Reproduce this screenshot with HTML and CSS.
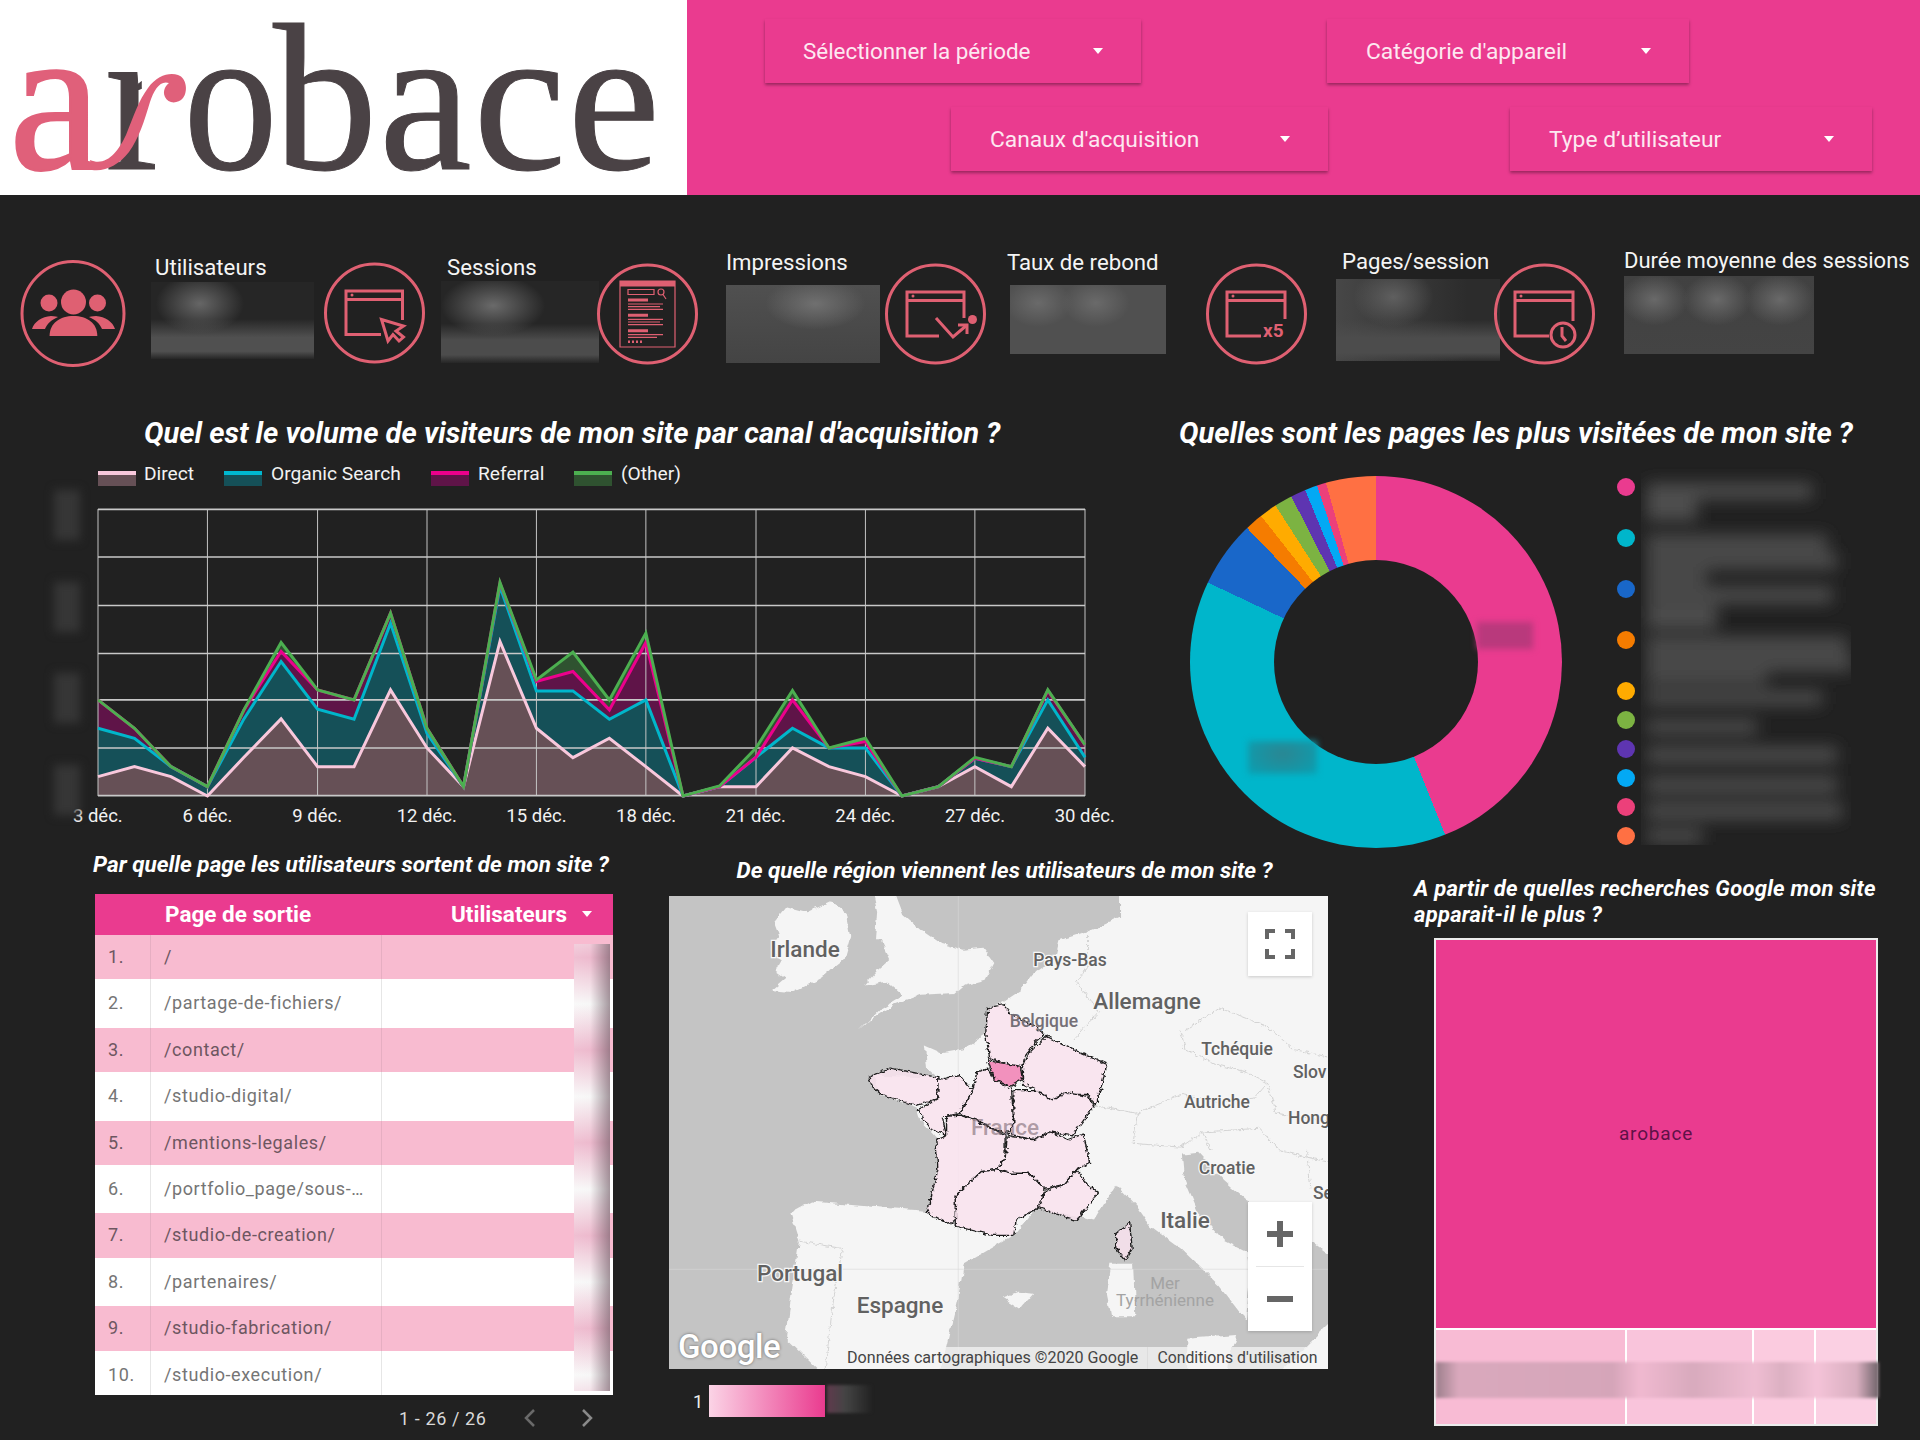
FILE: index.html
```html
<!DOCTYPE html>
<html lang="fr">
<head>
<meta charset="utf-8">
<title>arobace</title>
<link rel="stylesheet" href="styles.css">
</head>
<body>
<div class="dash">
  <header class="header">
    <div class="logo">
      <div class="logo-text"><span class="logo-a">a</span><span class="logo-r">r</span><span class="logo-o">o</span><span class="logo-rest">bace</span></div>
      <svg class="swoosh" viewBox="0 0 687 195"><path d="M90 160C106 167 118 152 126 135C134 115 139 100 148 88C157 75 170 72 178 75C187 78 188 92 183 98C178 104 168 104 165 97C162 91 166 85 169 83C160 80 154 90 150 102C144 122 139 138 129 152C119 165 105 172 92 170Z"/></svg>
    </div>
    <div class="filters">
      <div class="filter-row row-a">
        <div class="filter f1"><span>Sélectionner la période</span><i class="caret"></i></div>
        <div class="filter f2"><span>Catégorie d'appareil</span><i class="caret"></i></div>
      </div>
      <div class="filter-row row-b">
        <div class="filter f3"><span>Canaux d'acquisition</span><i class="caret"></i></div>
        <div class="filter f4"><span>Type d’utilisateur</span><i class="caret"></i></div>
      </div>
    </div>
  </header>

  <section class="kpis">
    <svg class="ic ic1" viewBox="0 0 106 107">
      <ellipse class="ring" cx="53" cy="53.5" rx="51" ry="52"/>
      <g class="solid">
        <circle cx="53.5" cy="42" r="12.5"/><circle cx="29" cy="43" r="8.5"/><circle cx="77.5" cy="43" r="8.5"/>
        <path d="M29.6 76C29.6 63 40 56 53.5 56C67 56 77.3 63 77.3 76Z"/>
        <path d="M12 69C14 62 22 56.5 31 56C35 56 37 57 38 57C31 60 27 64 25 69Z"/>
        <path d="M95 69C93 62 85 56.5 76 56C72 56 70 57 69 57C76 60 80 64 82 69Z"/>
      </g>
    </svg>
    <div class="stat s1"><div class="stat-label">Utilisateurs</div><div class="blur"></div></div>

    <svg class="ic ic2" viewBox="0 0 101 102">
      <circle class="ring" cx="50.5" cy="51" r="49"/>
      <g class="line">
        <path d="M57 72.500H22V29H78.500V58"/><path d="M22 37.500H78.500"/>
        <path d="M57.500 57.500L79.500 64L72 69L79.500 75L75 79L69 72.500L64 79Z"/>
      </g>
      <circle class="dot" cx="28" cy="33" r="1.500"/>
    </svg>
    <div class="stat s2"><div class="stat-label">Sessions</div><div class="blur"></div></div>

    <svg class="ic ic3" viewBox="0 0 101 102">
      <circle class="ring" cx="50.500" cy="51" r="49"/>
      <g class="thin">
        <path d="M23 18H78V84H23Z"/><path d="M31 26.500H57V31.500H31Z"/><circle cx="64" cy="29" r="3"/><path d="M66 31.500L69 36"/>
        <path d="M31 41H66M31 43.700H63M31 46.300H66M31 56.300H66M31 59H63M31 61.700H66M31 71.700H66M31 74.300H60"/>
      </g>
      <g class="solid">
        <path d="M23 18H78V23.500H23Z"/><path d="M31 35.500H51V38.500H31ZM31 50.800H51V53.800H31ZM31 66.200H51V69.200H31Z"/>
        <path d="M31 77.500H33V80H31ZM35 77.500H37V80H35ZM39 77.500H41V80H39ZM43 77.500H45V80H43Z"/>
      </g>
    </svg>
    <div class="stat s3"><div class="stat-label">Impressions</div><div class="blur"></div></div>

    <svg class="ic ic4" viewBox="0 0 101 102">
      <circle class="ring" cx="50.500" cy="51" r="49"/>
      <g class="line">
        <path d="M54 73H22V29H79V55"/><path d="M22 37.500H79"/>
        <path d="M51 55L68 74L82 62"/><path d="M73 62H82V71"/>
      </g>
      <circle class="dot" cx="28" cy="33" r="1.500"/><circle class="dot" cx="87.500" cy="56.500" r="4.500"/>
    </svg>
    <div class="stat s4"><div class="stat-label">Taux de rebond</div><div class="blur"></div></div>

    <svg class="ic ic5" viewBox="0 0 101 102">
      <circle class="ring" cx="50.500" cy="51" r="49"/>
      <g class="line"><path d="M55 73H21V29H79V56"/><path d="M21 37.500H79"/></g>
      <circle class="dot" cx="27" cy="33" r="1.500"/>
      <text class="x5" x="57" y="74">x5</text>
    </svg>
    <div class="stat s5"><div class="stat-label">Pages/session</div><div class="blur"></div></div>

    <svg class="ic ic6" viewBox="0 0 101 102">
      <circle class="ring" cx="50.500" cy="51" r="49"/>
      <g class="line">
        <path d="M55 73H21V29H79V58"/><path d="M21 37.500H79"/>
        <circle cx="69" cy="72" r="12"/><path d="M68 64V73L72 78"/>
      </g>
      <circle class="dot" cx="27" cy="33" r="1.500"/>
    </svg>
    <div class="stat s6"><div class="stat-label">Durée moyenne des sessions</div><div class="blur"></div></div>
  </section>

  <section class="mid">
    <div class="chart-panel">
      <h2 class="title chart-title">Quel est le volume de visiteurs de mon site par canal d'acquisition ?</h2>
      <div class="legend">
        <span class="lg lg-direct">Direct</span>
        <span class="lg lg-organic">Organic Search</span>
        <span class="lg lg-referral">Referral</span>
        <span class="lg lg-other">(Other)</span>
      </div>
      <div class="plot">
        <div class="yaxis-blur"><i></i><i></i><i></i><i></i></div>
        <svg class="plot-svg" viewBox="83 328 1407 860" preserveAspectRatio="none">
          <polygon class="f-other" points="83,900 135,985 187,1100 239,1160 291,930 344,728 396,870 448,900 500,640 552,985 604,1160 656,548 708,840 760,757 812,900 864,700 917,1188 969,1158 1021,1044 1073,872 1125,1044 1177,1015 1229,1188 1281,1160 1333,1072 1385,1100 1437,870 1490,1035 1490,1188 83,1188"/>
          <polygon class="f-ref" points="83,900 135,985 187,1100 239,1160 291,930 344,755 396,870 448,900 500,640 552,985 604,1160 656,550 708,845 760,815 812,930 864,728 917,1188 969,1160 1021,1072 1073,900 1125,1044 1177,1025 1229,1188 1281,1160 1333,1075 1385,1100 1437,872 1490,1035 1490,1188 83,1188"/>
          <polygon class="f-org" points="83,985 135,1015 187,1100 239,1160 291,957 344,785 396,928 448,958 500,670 552,1000 604,1160 656,560 708,873 760,873 812,958 864,900 917,1188 969,1160 1021,1072 1073,985 1125,1044 1177,1044 1229,1188 1281,1160 1333,1075 1385,1100 1437,900 1490,1072 1490,1188 83,1188"/>
          <polygon class="f-dir" points="83,1130 135,1100 187,1130 239,1188 291,1072 344,957 396,1100 448,1100 500,870 552,1044 604,1160 656,725 708,985 760,1073 812,1015 864,1100 917,1188 969,1160 1021,1160 1073,1044 1125,1100 1177,1130 1229,1188 1281,1160 1333,1100 1385,1160 1437,985 1490,1100 1490,1188 83,1188"/>
          <path class="grid-v" d="M83 328V1188M239 328V1188M396 328V1188M552 328V1188M708 328V1188M864 328V1188M1021 328V1188M1177 328V1188M1333 328V1188M1490 328V1188"/>
          <path class="grid-h" d="M83 329H1490M83 472H1490M83 617H1490M83 761H1490M83 900H1490M83 1044H1490M83 1187H1490"/>
          <polyline class="l-dir" points="83,1130 135,1100 187,1130 239,1188 291,1072 344,957 396,1100 448,1100 500,870 552,1044 604,1160 656,725 708,985 760,1073 812,1015 864,1100 917,1188 969,1160 1021,1160 1073,1044 1125,1100 1177,1130 1229,1188 1281,1160 1333,1100 1385,1160 1437,985 1490,1100"/>
          <polyline class="l-org" points="83,985 135,1015 187,1100 239,1160 291,957 344,785 396,928 448,958 500,670 552,1000 604,1160 656,560 708,873 760,873 812,958 864,900 917,1188 969,1160 1021,1072 1073,985 1125,1044 1177,1044 1229,1188 1281,1160 1333,1075 1385,1100 1437,900 1490,1072"/>
          <polyline class="l-ref" points="83,900 135,985 187,1100 239,1160 291,930 344,755 396,870 448,900 500,640 552,985 604,1160 656,550 708,845 760,815 812,930 864,728 917,1188 969,1160 1021,1072 1073,900 1125,1044 1177,1025 1229,1188 1281,1160 1333,1075 1385,1100 1437,872 1490,1035"/>
          <polyline class="l-other" points="83,900 135,985 187,1100 239,1160 291,930 344,728 396,870 448,900 500,640 552,985 604,1160 656,548 708,840 760,757 812,900 864,700 917,1188 969,1158 1021,1044 1073,872 1125,1044 1177,1015 1229,1188 1281,1160 1333,1072 1385,1100 1437,870 1490,1035"/>
        </svg>
      </div>
      <div class="ticks">
        <span>3 déc.</span><span>6 déc.</span><span>9 déc.</span><span>12 déc.</span><span>15 déc.</span><span>18 déc.</span><span>21 déc.</span><span>24 déc.</span><span>27 déc.</span><span>30 déc.</span>
      </div>
    </div>

    <div class="donut-panel">
      <h2 class="title donut-title">Quelles sont les pages les plus visitées de mon site ?</h2>
      <div class="donut-row">
        <div class="donut">
          <div class="hole"></div>
          <div class="patch patch-pink"></div>
          <div class="patch patch-teal"></div>
        </div>
        <div class="donut-legend">
          <i class="d d1"></i><i class="d d2"></i><i class="d d3"></i><i class="d d4"></i><i class="d d5"></i><i class="d d6"></i><i class="d d7"></i><i class="d d8"></i><i class="d d9"></i><i class="d d10"></i>
        </div>
        <svg class="legend-blur" viewBox="0 0 210 380">
          <defs><filter id="soft" x="-20%" y="-20%" width="140%" height="140%"><feGaussianBlur stdDeviation="8"/></filter></defs>
          <g filter="url(#soft)" class="blur-bars">
            <rect x="6" y="18" width="165" height="16"/><rect x="6" y="34" width="50" height="22"/>
            <rect x="6" y="70" width="180" height="16"/><rect x="6" y="88" width="190" height="16"/><rect x="6" y="106" width="60" height="14"/>
            <rect x="6" y="122" width="185" height="16"/><rect x="6" y="140" width="70" height="24"/>
            <rect x="6" y="172" width="200" height="16"/><rect x="6" y="190" width="205" height="16"/><rect x="6" y="208" width="120" height="12"/>
            <rect x="6" y="226" width="175" height="14"/>
            <rect x="6" y="255" width="110" height="14"/>
            <rect x="6" y="282" width="190" height="16"/>
            <rect x="6" y="312" width="190" height="16"/>
            <rect x="6" y="338" width="195" height="16"/>
            <rect x="6" y="364" width="55" height="14"/>
          </g>
        </svg>
      </div>
    </div>
  </section>

  <section class="bottom">
    <div class="col-table">
      <h3 class="title-sm">Par quelle page les utilisateurs sortent de mon site ?</h3>
      <div class="table">
        <div class="thead">
          <span class="th-page">Page de sortie</span>
          <span class="th-users">Utilisateurs</span><i class="caret th-caret"></i>
        </div>
        <div class="tr"><span class="num">1.</span><span class="page">/</span><span></span></div>
        <div class="tr"><span class="num">2.</span><span class="page">/partage-de-fichiers/</span><span></span></div>
        <div class="tr"><span class="num">3.</span><span class="page">/contact/</span><span></span></div>
        <div class="tr"><span class="num">4.</span><span class="page">/studio-digital/</span><span></span></div>
        <div class="tr"><span class="num">5.</span><span class="page">/mentions-legales/</span><span></span></div>
        <div class="tr"><span class="num">6.</span><span class="page">/portfolio_page/sous-…</span><span></span></div>
        <div class="tr"><span class="num">7.</span><span class="page">/studio-de-creation/</span><span></span></div>
        <div class="tr"><span class="num">8.</span><span class="page">/partenaires/</span><span></span></div>
        <div class="tr"><span class="num">9.</span><span class="page">/studio-fabrication/</span><span></span></div>
        <div class="tr"><span class="num">10.</span><span class="page">/studio-execution/</span><span></span></div>
        <div class="col-blur"></div>
      </div>
      <div class="pager">
        <span class="pager-text">1 - 26 / 26</span>
        <svg class="chev chev-l" viewBox="0 0 14 20"><path d="M11 2L3 10L11 18"/></svg>
        <svg class="chev chev-r" viewBox="0 0 14 20"><path d="M3 2L11 10L3 18"/></svg>
      </div>
    </div>

    <div class="col-map">
      <h3 class="title-sm map-title">De quelle région viennent les utilisateurs de mon site ?</h3>
      <div class="map">
        <svg class="map-svg" viewBox="0 0 659 473">
          <defs>
            <filter id="rough" x="-5%" y="-5%" width="110%" height="110%"><feTurbulence type="fractalNoise" baseFrequency=".035" numOctaves="3" seed="4"/><feDisplacementMap in="SourceGraphic" scale="16" xChannelSelector="R" yChannelSelector="G"/></filter>
            <filter id="jag" x="-5%" y="-5%" width="110%" height="110%"><feTurbulence type="fractalNoise" baseFrequency=".09" numOctaves="3" seed="7"/><feDisplacementMap in="SourceGraphic" scale="13" xChannelSelector="R" yChannelSelector="G"/></filter>
          </defs>
          <g transform="scale(.4337 .3759) translate(-20 -122)">
            <rect x="20" y="122" width="1520" height="1258" class="sea"/>
            <g class="land" filter="url(#rough)">
              <path d="M262 190L290 150L340 165L395 135L430 170L440 230L425 290L370 340L300 380L255 375L290 340L265 320L280 290L250 270L275 230Z"/>
              <path d="M490 110L540 110L560 170L600 210L650 250L700 265L745 260L770 300L750 345L700 360L680 380L600 385L540 410L500 440L460 480L510 420L560 385L525 350L470 360L500 320L530 290L510 240L495 240L500 160Z"/>
              <path d="M1060 110L1060 180L990 215L920 240L910 290L860 330L830 375L790 405L755 420L750 490L700 530L650 540L610 520L615 580L640 605L490 600L510 650L590 680L600 720L640 770L640 850L620 960L500 950L350 935L300 965L320 1040L300 1200L290 1300L380 1400L640 1400L660 1320L690 1170L700 1100L820 1020L870 950L1000 985L1050 890L1100 950L1130 1000L1200 1060L1290 1160L1350 1250L1360 1130L1352 1070L1300 1040L1240 960L1210 880L1205 810L1240 805L1300 880L1350 930L1400 960L1500 1040L1560 1090V110Z"/>
              <path d="M1040 1100L1090 1100L1095 1240L1040 1240L1030 1180Z"/>
              <path d="M1215 1300L1330 1290L1300 1400L1215 1400Z"/>
              <path d="M790 1190L830 1220L860 1180L825 1175Z"/>
              <path d="M1420 1400L1560 1240V1400Z"/>
            </g>
            <g filter="url(#jag)">
              <path class="border" d="M985 210L985 310L960 350L1010 430L950 510M1210 480L1290 420L1400 470L1460 530L1540 550M1200 480L1210 530L1280 570L1350 590L1400 620M1000 680L1100 700L1200 650L1280 670L1370 660L1400 620M1100 700L1090 780L1200 790L1250 750L1380 740M1250 750L1270 800M1380 740L1430 800L1540 830M1400 620L1420 700L1540 720M320 1040L420 1060L400 1190L380 1380M1490 800L1500 900"/>
            </g>
            <path class="meridian" d="M687 122V1380M20 1115H1540"/>
          </g>
          <text class="ml ml-lg" x="136" y="61" text-anchor="middle">Irlande</text>
          <text class="ml" x="401" y="70" text-anchor="middle">Pays-Bas</text>
          <text class="ml ml-lg" x="478" y="113" text-anchor="middle">Allemagne</text>
          <text class="ml" x="568" y="159" text-anchor="middle">Tchéquie</text>
          <text class="ml" x="624" y="182">Slov</text>
          <text class="ml" x="548" y="212" text-anchor="middle">Autriche</text>
          <text class="ml" x="619" y="228">Hong</text>
          <text class="ml" x="558" y="278" text-anchor="middle">Croatie</text>
          <text class="ml" x="644" y="303">Se</text>
          <text class="ml ml-lg" x="516" y="332" text-anchor="middle">Italie</text>
          <text class="ml ml-lg" x="131" y="385" text-anchor="middle">Portugal</text>
          <text class="ml ml-lg" x="231" y="417" text-anchor="middle">Espagne</text>
          <text class="ml ml-sea" x="496" y="393" text-anchor="middle">Mer</text>
          <text class="ml ml-sea" x="496" y="410" text-anchor="middle">Tyrrhénienne</text>
          <g transform="scale(.4337 .3759) translate(-20 -122)" class="regions" filter="url(#jag)">
            <path d="M755 420L795 410L805 435L860 465L885 490L865 510L840 550L835 580L760 555L750 490Z"/>
            <path d="M890 495L970 540L1030 570L1005 680L985 650L930 650L905 665L870 640L835 620L835 580L850 540Z"/>
            <path d="M480 605L530 580L600 595L640 605L640 660L590 680L510 650L490 630Z"/>
            <path d="M640 610L690 600L720 640L690 700L650 710L660 760L620 740L595 690L640 660Z"/>
            <path d="M730 590L755 580L770 610L810 635L815 730L795 755L730 720L690 700L720 640Z"/>
            <path d="M815 640L870 640L905 665L935 645L985 655L1000 680L950 760L900 750L860 770L800 755L815 730Z"/>
            <path d="M660 708L690 705L730 720L795 760L795 820L775 850L740 855L680 920L685 980L665 995L615 965L640 850L635 770L660 760Z"/>
            <path d="M800 760L860 770L900 750L940 770L975 755L990 830L960 850L930 890L885 900L850 860L810 860L775 850L795 820Z"/>
            <path d="M740 855L775 850L810 860L850 860L885 900L875 950L820 985L815 1025L765 1025L680 1000L680 920Z"/>
            <path d="M960 850L985 890L1010 910L960 985L905 965L870 950L890 905L930 890Z"/>
            <path d="M1050 1020L1082 990L1088 1060L1072 1090L1050 1060Z"/>
            <path class="idf" d="M755 560L830 575L835 610L805 630L770 610Z"/>
          </g>
          <text class="ml ml-be" x="375" y="131" text-anchor="middle">Belgique</text>
          <text class="ml ml-lg ml-fr" x="336" y="239" text-anchor="middle">France</text>
        </svg>
        <div class="fs-btn"><svg viewBox="0 0 30 30"><path d="M2 10V2H10M20 2H28V10M28 20V28H20M10 28H2V20"/></svg></div>
        <div class="zoom-btn">
          <div class="zoom-part"><svg viewBox="0 0 30 30"><path d="M15 2V28M2 15H28"/></svg></div>
          <div class="zoom-part"><svg viewBox="0 0 30 30"><path d="M2 15H28"/></svg></div>
        </div>
        <div class="gg">Google</div>
        <div class="attr"><span>Données cartographiques ©2020 Google</span><span class="attr-2">Conditions d'utilisation</span></div>
      </div>
      <div class="scale">
        <span class="scale-num">1</span><div class="scale-bar"></div><div class="scale-blur"></div>
      </div>
    </div>

    <div class="col-tree">
      <h3 class="title-sm tree-title">A partir de quelles recherches Google mon site<br>apparait-il le plus ?</h3>
      <div class="tree">
        <div class="tile-main">arobace</div>
        <div class="tile-row">
          <div class="t t1"></div><div class="t t2"></div><div class="t t3"></div><div class="t t4"></div>
        </div>
        <div class="tree-blur"></div>
      </div>
    </div>
  </section>
</div>
</body>
</html>
```
FILE: styles.css
```css
* { box-sizing: border-box; }
html, body { margin: 0; padding: 0; background: #212121; }
body { font-family: Roboto, "Liberation Sans", sans-serif; color: #fff; }
.dash { width: 1920px; height: 1440px; overflow: hidden; position: relative; background: #212121; }

/* header */
.header { display: flex; height: 195px; background: #ea3b8f; }
.logo { position: relative; width: 687px; height: 195px; background: #fff; }
.logo-text { height: 195px; padding-left: 9px; font-family: "Liberation Serif", serif; font-size: 209px; line-height: 197px;
  color: #4a4245; white-space: nowrap; -webkit-text-stroke: 1px #4a4245; }
.logo-a { color: #e0607a; -webkit-text-stroke: 2px #e0607a; }
.logo-r { display: inline-block; margin-left: 3px; clip-path: polygon(-5px -10px, 37px -10px, 37px 125px, 110% 125px, 110% 110%, -5px 110%); }
.logo-o { display: inline-block; margin-left: 9px; margin-right: -15px; transform: scaleX(.9); transform-origin: 6px 50%; }
.logo-rest { letter-spacing: 1.500px; }
.swoosh { position: absolute; inset: 0; width: 687px; height: 195px; fill: #e0607a; }
.filters { flex: 1; display: flex; flex-direction: column; padding-top: 19px; gap: 24px; }
.filter-row { display: flex; height: 64px; }
.row-a { margin-left: 78px; gap: 186px; }
.row-b { margin-left: 264px; gap: 182px; }
.filter { display: flex; align-items: center; justify-content: space-between; height: 64px; padding: 0 38px 0 39px;
  background: #ea3b8f; box-shadow: 0 2px 3px rgba(0,0,0,.35); font-size: 22.800px; color: #fde8f1; }
.f1 { width: 376px; font-size: 22.400px; padding-left: 38px; }
.f2 { width: 362px; }
.f3 { width: 377px; }
.f4 { width: 362px; }
.caret { display: block; width: 0; height: 0; border-left: 5px solid transparent; border-right: 5px solid transparent; border-top: 6px solid #fff; }

/* KPI row */
.kpis { display: flex; align-items: flex-start; height: 220px; padding: 53px 0 0 20px; }
.ic { flex: none; display: block; width: 101px; height: 102px; margin-top: 15px; }
.ring { fill: none; stroke: #df6072; stroke-width: 3; }
.solid { fill: #df6072; }
.line { fill: none; stroke: #df6072; stroke-width: 3; }
.thin { fill: none; stroke: #df6072; stroke-width: 1.2; }
.dot { fill: #df6072; }
.x5 { fill: #df6072; font: 700 19px Roboto, sans-serif; }
.ic1 { width: 106px; height: 107px; margin-top: 12px; }
.ic2 { margin-left: 10px; margin-top: 14px; }
.ic3 { margin-left: -2px; }
.ic4 { margin-left: 5px; }
.ic5 { margin-left: 40px; }
.ic6 { margin-left: -6px; }
.stat { flex: none; }
.stat-label { height: 26px; line-height: 26px; font-size: 22.200px; color: #f5f5f5; white-space: nowrap; }
.blur { background-color: #262626; }
.s1 { width: 163px; margin: 6px 0 0 25px; }
.s1 .stat-label { padding-left: 4px; }
.s1 .blur { height: 77px; margin-top: 2px;
  background-image: radial-gradient(ellipse 44px 30px at 30% 28%, #666, rgba(102,102,102,0)), linear-gradient(to bottom, rgba(85,85,85,0) 48%, #505050 72%, #505050 90%, rgba(85,85,85,0)); }
.s2 { width: 158px; margin: 6px 0 0 16px; }
.s2 .stat-label { padding-left: 6px; }
.s2 .blur { height: 82px; margin-top: 1px;
  background-image: radial-gradient(ellipse 52px 30px at 33% 30%, #6a6a6a, rgba(102,102,102,0)), linear-gradient(to bottom, rgba(85,85,85,0) 52%, #4c4c4c 72%, #4c4c4c 90%, rgba(85,85,85,0)); }
.s3 { width: 154px; margin: 1px 0 0 28px; }
.s3 .blur { height: 78px; margin-top: 10px;
  background-image: radial-gradient(ellipse 50px 26px at 58% 24%, #707070, rgba(102,102,102,0)), linear-gradient(to bottom, #505050 0, #444 100%); }
.s4 { width: 159px; margin: 1px 0 0 21px; }
.s4 .blur { width: 156px; height: 69px; margin: 10px 0 0 3px;
  background-image: radial-gradient(ellipse 34px 24px at 18% 26%, #6a6a6a, rgba(102,102,102,0)), radial-gradient(ellipse 34px 24px at 55% 26%, #6a6a6a, rgba(102,102,102,0)), linear-gradient(to bottom, #505050 0, #505050 100%); }
.s5 { width: 164px; margin: 0 0 0 29px; }
.s5 .stat-label { padding-left: 6px; }
.s5 .blur { height: 82px; margin-top: 5px;
  background-image: radial-gradient(ellipse 40px 30px at 35% 22%, #5f5f5f, rgba(102,102,102,0)), linear-gradient(to bottom, rgba(85,85,85,0) 50%, #4c4c4c 72%, #4c4c4c 90%, rgba(85,85,85,0)), linear-gradient(to right, #474747 0, #2c2c2c 80%); }
.s6 { width: 290px; margin: 0 0 0 29px; }
.s6 .stat-label { font-size: 22px; }
.s6 .blur { width: 190px; height: 78px; margin-top: 2px;
  background-image: radial-gradient(ellipse 34px 26px at 16% 30%, #696969, rgba(102,102,102,0)), radial-gradient(ellipse 34px 26px at 49% 30%, #696969, rgba(102,102,102,0)), radial-gradient(ellipse 34px 26px at 82% 30%, #696969, rgba(102,102,102,0)), linear-gradient(to bottom, #414141 0, #444 100%); }

/* middle */
.mid { display: flex; height: 430px; }
.title { margin: 0; height: 36px; font-size: 29.100px; line-height: 37px; font-weight: 700; font-style: italic; color: #fff; white-space: nowrap; }
.chart-panel { position: relative; width: 1179px; }
.chart-title { padding-left: 144px; }
.legend { display: flex; height: 28px; margin: 9px 0 0 98px; font-size: 19.200px; line-height: 28px; color: #f2f2f2; }
.lg { position: relative; padding-left: 46px; }
.lg::before { content: ""; position: absolute; left: 0; top: 11px; width: 38px; height: 11px; }
.lg-direct { width: 126px; }
.lg-direct::before { background: #665056; border-top: 4px solid #f8c8dc; }
.lg-organic { width: 207px; padding-left: 47px; }
.lg-organic::before { background: #155058; border-top: 4px solid #00b8d0; }
.lg-referral { width: 143px; padding-left: 47px; }
.lg-referral::before { background: #5f1448; border-top: 4px solid #ec008c; }
.lg-other { padding-left: 47px; }
.lg-other::before { background: #2f5230; border-top: 4px solid #4caf50; }
.plot { position: relative; height: 287px; margin: 21px 0 0 98px; }
.plot-svg { display: block; width: 987px; height: 287px; overflow: visible; }
.plot-svg polygon { stroke: none; }
.f-other { fill: #2f5230; }
.f-ref { fill: #5f1448; }
.f-org { fill: #155058; }
.f-dir { fill: #665056; }
.plot-svg path, .plot-svg polyline { fill: none; vector-effect: non-scaling-stroke; }
.grid-v { stroke: #c4c4c4; stroke-width: 1; }
.grid-h { stroke: #c8c8c8; stroke-width: 1.600; }
.l-dir { stroke: #f8c8dc; stroke-width: 3; }
.l-org { stroke: #00b6cb; stroke-width: 3; }
.l-ref { stroke: #ec008c; stroke-width: 3; }
.l-other { stroke: #4caf50; stroke-width: 3; }
.yaxis-blur { position: absolute; left: -44px; top: -19px; width: 26px; height: 325px; display: flex; flex-direction: column; justify-content: space-between; filter: blur(5px); }
.yaxis-blur i { display: block; height: 50px; background: #363636; }
.ticks { display: flex; margin: 7px 0 0 43px; font-size: 18.500px; line-height: 26px; color: #f2f2f2; }
.ticks span { flex: none; width: 109.670px; text-align: center; }

.donut-panel { flex: 1; }
.donut-row { position: relative; display: flex; margin: 25px 0 0 11px; }
.donut { position: relative; flex: none; width: 372px; height: 372px; border-radius: 50%;
  display: flex; align-items: center; justify-content: center;
  background: conic-gradient(#ea3b8f 0 158.2deg, #00b6cb 158.2deg 295.3deg, #1967c9 295.3deg 316.1deg, #f57c00 316.1deg 321.8deg, #ffab00 321.8deg 327.3deg, #7cb342 327.3deg 332.9deg, #5e35b1 332.9deg 337.6deg, #03a9f4 337.6deg 341.5deg, #ec407a 341.5deg 344.4deg, #ff7043 344.4deg 360deg); }
.hole { width: 204px; height: 204px; border-radius: 50%; background: #212121; }
.patch { position: absolute; filter: blur(3px); }
.patch-pink { left: 287px; top: 146px; width: 56px; height: 27px; background: #b9397c; }
.patch-teal { left: 58px; top: 265px; width: 69px; height: 33px; background: radial-gradient(ellipse at 50% 40%, #2b8692, #08a0b3); }
.donut-legend { flex: none; width: 18px; height: 372px; margin-left: 55px; display: flex; flex-direction: column; }
.d { display: block; width: 18px; height: 18px; border-radius: 50%; }
.d1 { background: #ea3b8f; margin-top: 2px; }
.d2 { background: #00b6cb; margin-top: 33px; }
.d3 { background: #1967c9; margin-top: 33px; }
.d4 { background: #f57c00; margin-top: 33px; }
.d5 { background: #ffab00; margin-top: 33px; }
.d6 { background: #7cb342; margin-top: 11px; }
.d7 { background: #5e35b1; margin-top: 11px; }
.d8 { background: #03a9f4; margin-top: 11px; }
.d9 { background: #ec407a; margin-top: 11px; }
.d10 { background: #ff7043; margin-top: 11px; }
.legend-blur { position: absolute; left: 451px; top: -11px; width: 210px; height: 380px; overflow: hidden; }
.blur-bars rect { fill: #4e4e4e; }

/* bottom */
.bottom { display: flex; height: 595px; }
.title-sm { margin: 0; font-size: 22.500px; line-height: 30px; font-weight: 700; font-style: italic; color: #fff; white-space: nowrap; }
.col-table { flex: none; width: 520px; margin-left: 93px; padding-top: 4px; }
.table { position: relative; width: 518px; margin: 15px 0 0 2px; }
.thead { display: flex; align-items: center; height: 41px; padding-bottom: 2px; background: #ea3b8f; font-size: 22.500px; font-weight: 700; color: #fff; }
.th-page { margin-left: 70px; width: 286px; }
.th-users { width: 119px; }
.th-caret { margin-left: 12px; }
.tr { display: grid; grid-template-columns: 56px 231px 1fr; font-size: 18px; color: #757575; background: #fff; }
.tr > span { display: block; line-height: 1; border-right: 1px solid #e6e6e6; align-self: stretch; padding-top: 15px; }
.tr > span:last-child { border-right: 0; }
.tr:nth-child(even) { height: 44.400px; background: #f8bbd0; color: #6d5660; }
.tr:nth-child(even) > span { border-right-color: #e6aec2; padding-top: 13px; }
.tr:nth-child(odd) { height: 48.400px; }
.tr:nth-child(11) { height: 44.800px; }
.num { padding-left: 13px; letter-spacing: .6px; }
.page { padding-left: 13px; letter-spacing: .6px; white-space: nowrap; overflow: hidden; }
.col-blur { position: absolute; left: 479px; top: 50px; width: 36px; height: 447px;
  background-image: linear-gradient(to right, rgba(255,255,255,.15), rgba(235,235,235,.1) 45%, rgba(110,90,100,.62)), linear-gradient(to bottom, #f8f8f8, #edb4ca 50%, #f8f8f8);
  background-size: 100% 100%, 100% 92.800px; background-position: 0 0, 0 -33px; }
.pager { display: flex; align-items: center; height: 46px; margin-left: 306px; color: #d9d9d9; font-size: 18px; letter-spacing: .6px; }
.pager-text { width: 86px; white-space: nowrap; }
.chev { display: block; width: 14px; height: 20px; fill: none; stroke-width: 2.500; }
.chev-l { margin-left: 38px; stroke: #6a6a6a; }
.chev-r { margin-left: 43px; stroke: #8a8a8a; }

.col-map { flex: none; width: 659px; margin-left: 56px; padding-top: 11px; }
.map-title { text-align: center; line-height: 28px; height: 30px; padding-left: 12px; }
.map { position: relative; width: 659px; height: 473px; margin-top: 10px; overflow: hidden; background: #c4c4c4; }
.map-svg { display: block; width: 659px; height: 473px; }
.sea { fill: #c4c4c4; }
.land { fill: #f5f5f5; }
.border { fill: none; stroke: #cfcfcf; stroke-width: 2.200; }
.meridian { fill: none; stroke: #d8d8d8; stroke-width: 1.500; }
.regions path { fill: #f9e3ee; fill-opacity: .85; stroke: #1c1c1c; stroke-width: 3.200; stroke-linejoin: round; }
.regions .idf { fill: #f291bd; fill-opacity: 1; }
.ml { font: 500 17.500px Roboto, sans-serif; fill: #616161; stroke: #f7f7f7; stroke-width: 2.500px; paint-order: stroke; }
.ml-lg { font-size: 22.500px; }
.ml-sea { font-weight: 400; font-size: 17px; fill: #a3a3a3; stroke: none; }
.ml-fr { fill: rgba(110,90,100,.55); stroke: none; }
.ml-be { fill: #757077; stroke: none; }
.fs-btn, .zoom-btn { position: absolute; right: 16px; width: 64px; background: #fff; box-shadow: 0 1px 3px rgba(0,0,0,.18); display: flex; align-items: center; justify-content: center; }
.fs-btn { top: 16px; height: 64px; }
.fs-btn svg { width: 30px; height: 30px; fill: none; stroke: #666; stroke-width: 4; }
.zoom-btn { top: 306px; height: 129px; flex-direction: column; }
.zoom-part { flex: 1; width: 100%; display: flex; align-items: center; justify-content: center; }
.zoom-part svg { width: 30px; height: 30px; fill: none; stroke: #666; stroke-width: 6; }
.zoom-part:first-child { border-bottom: 1px solid #e6e6e6; margin: 0 8px; width: 48px; }
.gg { position: absolute; left: 9px; bottom: 0; font: 500 33px Roboto, sans-serif; letter-spacing: -.4px; line-height: 44px; color: #fff; text-shadow: 0 0 3px rgba(0,0,0,.5); }
.attr { position: absolute; right: 0; bottom: 0; left: 174px; height: 22px; display: flex; background: rgba(245,245,245,.72); font-size: 16.100px; line-height: 22px; color: #444; padding-left: 4px; white-space: nowrap; }
.attr-2 { margin-left: 9px; padding-left: 9px; border-left: 1px solid #ddd; font-size: 15.800px; }
.scale { display: flex; align-items: center; height: 32px; margin-top: 16px; padding-left: 24px; font-size: 18px; color: #eee; }
.scale-num { width: 16px; }
.scale-bar { width: 116px; height: 32px; background: linear-gradient(to right, #fbd4e6, #ea3b8f); }
.scale-blur { width: 46px; height: 28px; margin: -4px 0 0 2px; background: linear-gradient(to right, #5f3a4d, #444 40%, rgba(68,68,68,0)); filter: blur(1.500px); }

.col-tree { flex: none; width: 470px; margin-left: 86px; padding-top: 31px; }
.tree-title { font-size: 22px; line-height: 25.800px; letter-spacing: .25px; }
.tree { position: relative; width: 444px; height: 488px; margin: 10px 0 0 20px; border: 2px solid #ececec; background: #fff; display: flex; flex-direction: column; }
.tile-main { height: 388px; background: #ea3b8f; display: flex; align-items: center; justify-content: center; font-size: 19px; letter-spacing: .8px; color: #5f1147; }
.tile-row { flex: 1; display: flex; gap: 2px; margin-top: 2px; }
.t { height: 100%; }
.t1 { width: 189px; background: #f8bbd4; }
.t2 { width: 125px; background: #f9c4db; }
.t3 { width: 60px; background: #fbcbdf; }
.t4 { flex: 1; background: #fbd0e3; }
.tree-blur { position: absolute; left: 0; right: -3px; top: 422px; height: 36px; filter: blur(1.500px);
  background: linear-gradient(to right, #9d7f8c, #d9a8bc 5%, #d5a5b9 40%, #f0b9d0 46%, #d8aabd 58%, #efbdd2 72%, #dcb0c2 78%, #f4c3d8 86%, #d8aebf 95%, #6e6268); }
```
